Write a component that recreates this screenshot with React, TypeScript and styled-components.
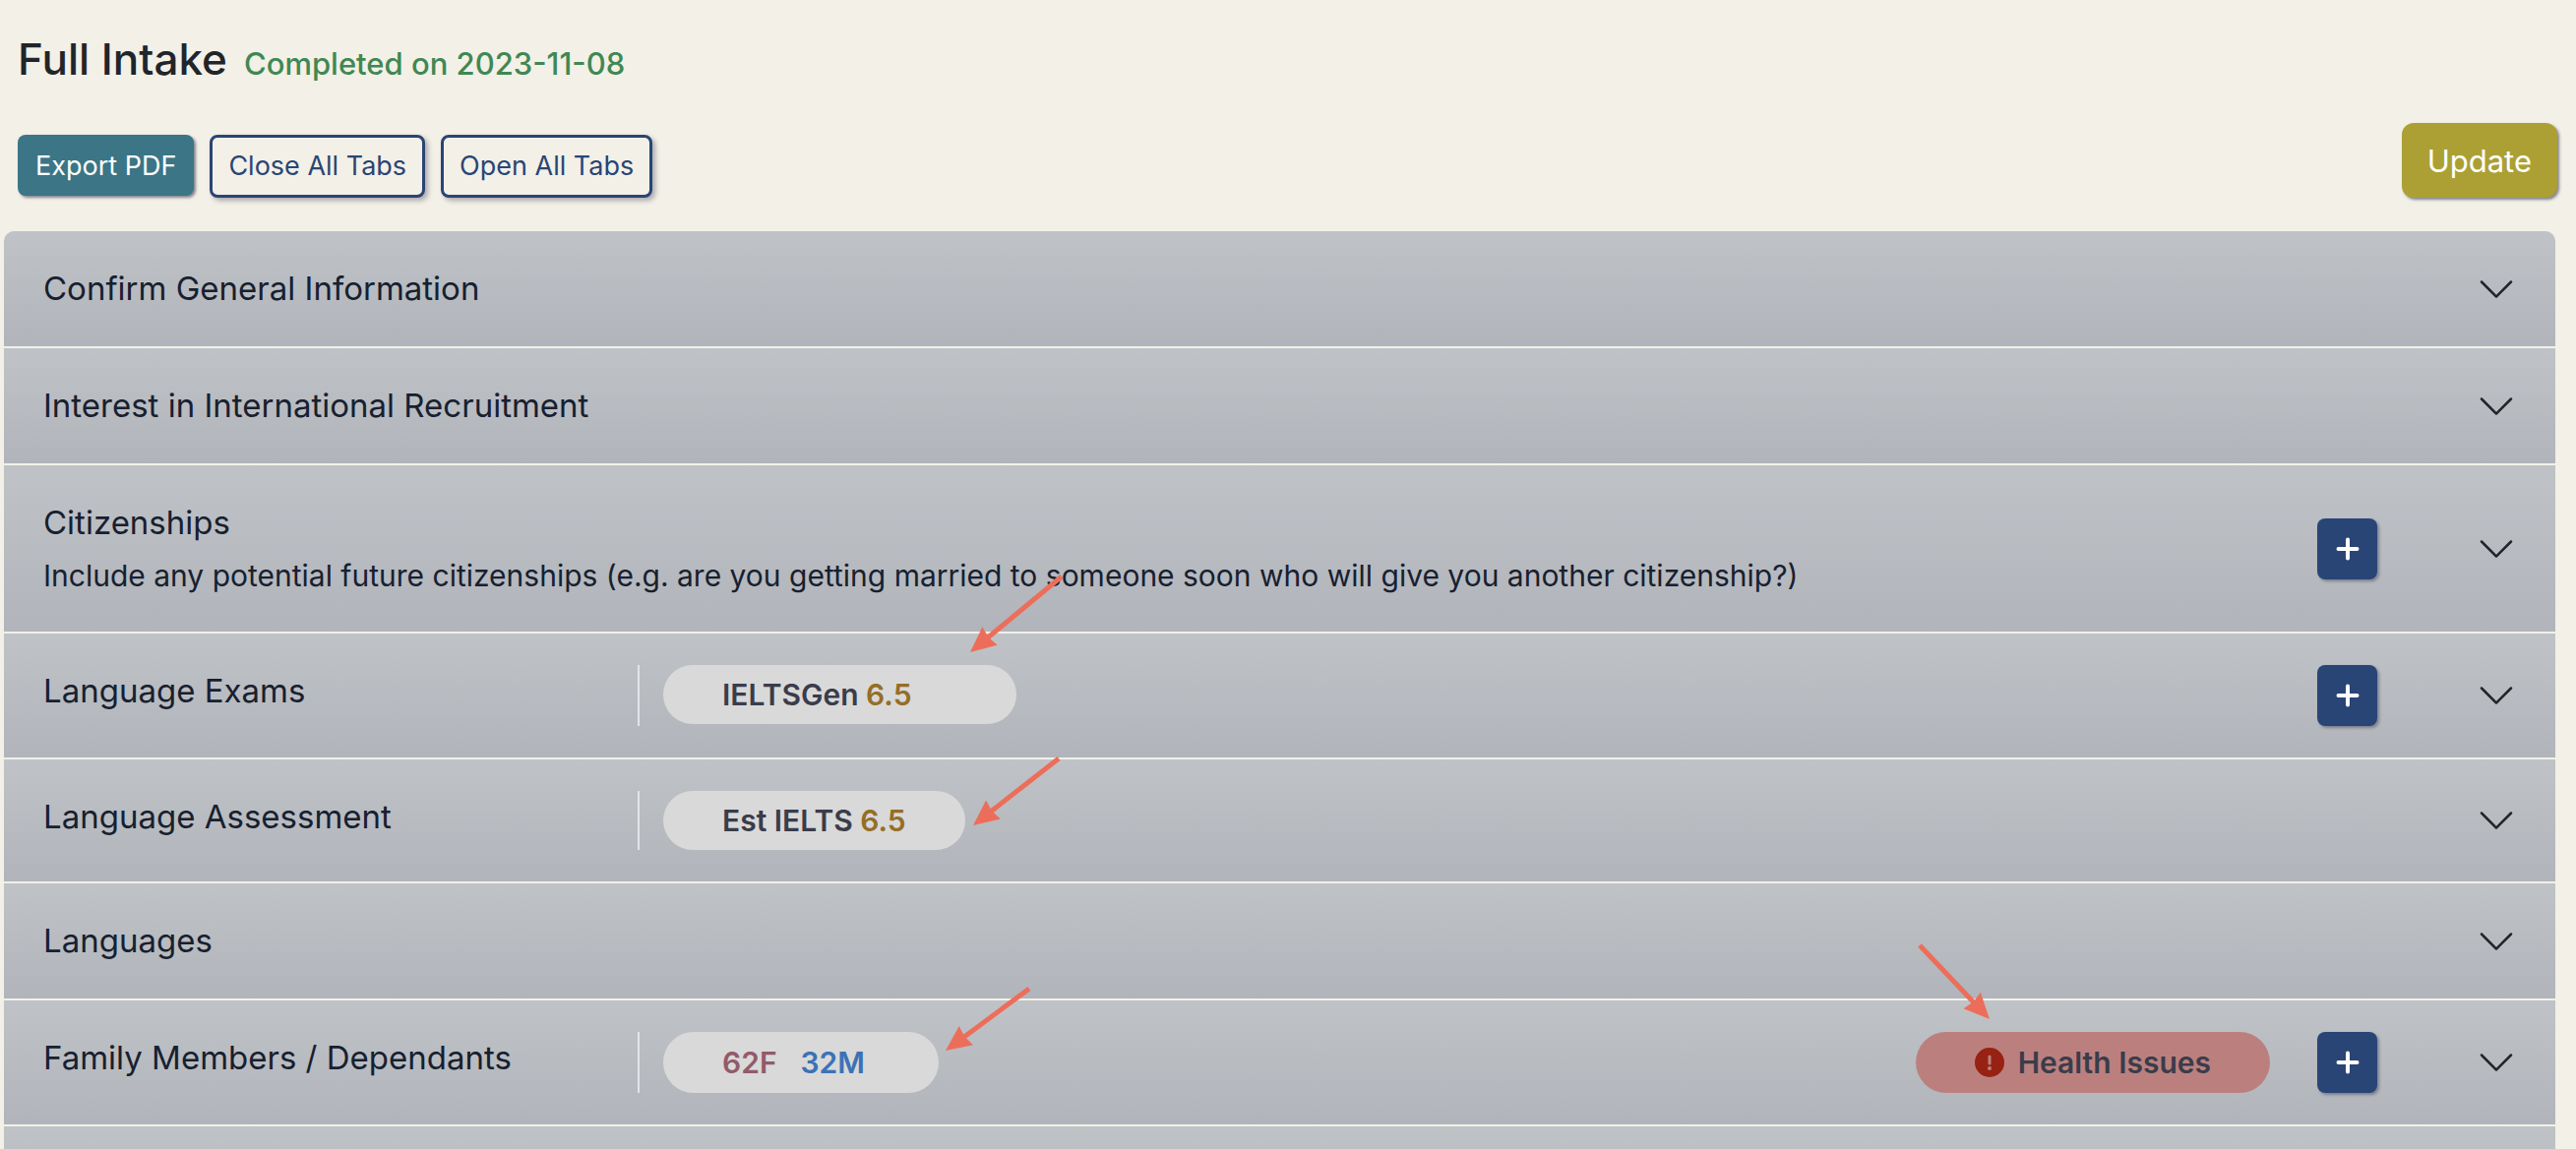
import React from "react";
import styled, { createGlobalStyle } from "styled-components";

const GlobalStyle = createGlobalStyle`
  *, *::before, *::after { box-sizing: border-box; }
  body {
    margin: 0;
    background: #f3f0e7;
    color: #212529;
    font-family: Inter, "Liberation Sans", sans-serif;
    font-size: 27px;
  }
  button { font-family: inherit; cursor: pointer; }
`;

const Page = styled.main`
  height: 100vh;
  overflow: hidden;
  padding: 27px 0 0 4px;
`;

const Header = styled.header`
  display: flex;
  align-items: baseline;
  gap: 17px;
  padding-left: 14px;
`;

const PageTitle = styled.h1`
  margin: 0;
  font-size: 44px;
  line-height: 66px;
  font-weight: 500;
`;

const Status = styled.span`
  color: #3f8853;
  font-size: 31px;
  font-weight: 500;
`;

const Toolbar = styled.div`
  display: flex;
  justify-content: space-between;
  align-items: flex-end;
  padding: 32px 19px 34px 14px;
`;

const ButtonGroup = styled.div`
  display: flex;
  align-items: flex-start;
  gap: 16px;
`;

const Button = styled.button`
  border: 0;
  border-radius: 8px;
  padding: 11px 18px 9px;
  font-size: 27px;
  line-height: 42px;
  box-shadow: 2px 2px 3px rgba(40, 40, 70, 0.55);
`;

const ExportButton = styled(Button)`
  background: #3b7586;
  color: #fff;
`;

const OutlineButton = styled(Button)`
  border: 3px solid #294575;
  padding: 8px 16px;
  background: #f3f0e7;
  color: #294575;
  box-shadow: 3px 3px 5px rgba(40, 40, 70, 0.35);
`;

const UpdateButton = styled(Button)`
  border-radius: 12px;
  padding: 15px 26px 13px;
  background: #aca034;
  color: #fff;
  font-size: 31px;
  line-height: 48px;
`;

const Accordion = styled.div`
  display: flex;
  flex-direction: column;
  gap: 2px;
  margin-right: 21px;
  border-radius: 10px;
  overflow: hidden;
`;

const Row = styled.section`
  display: flex;
  align-items: center;
  min-height: 117px;
  padding: 32px 40px;
  background: linear-gradient(#bfc3c7, #b1b4ba);
  color: #17202f;
`;

const RowBody = styled.div`
  flex: 1;
  align-self: stretch;
  display: flex;
  align-items: stretch;
`;

const Heading = styled.div`
  min-width: 604px;
`;

const RowTitle = styled.h2`
  margin: 0;
  font-size: 33px;
  line-height: 53px;
  font-weight: 400;
`;

const Description = styled.p`
  margin: 0;
  padding-top: 2px;
  font-size: 30px;
  line-height: 50px;
`;

const Summary = styled.div<{ $fill?: boolean }>`
  display: flex;
  align-items: ${(p) => (p.$fill ? "stretch" : "flex-start")};
  padding-left: 24px;
  border-left: 2px solid #e1e4e8;
`;

const Pill = styled.div<{ $tone?: "alert"; $trail?: number }>`
  position: relative;
  display: flex;
  align-items: center;
  min-height: 60px;
  padding: 0 ${(p) => p.$trail ?? 60}px 0 60px;
  border-radius: 31px;
  background: ${(p) => (p.$tone === "alert" ? "#bb807e" : "#d9d9d9")};
  color: #3a3c4a;
  font-size: 30px;
  line-height: 60px;
  font-weight: 600;
  white-space: pre;
`;

const AlertPill = styled(Pill)`
  gap: 14px;
  min-height: 62px;
  margin: 0 48px 0 auto;
`;

const Score = styled.span`
  color: #956e26;
`;

const Member = styled.span<{ $sex: "F" | "M" }>`
  margin-right: ${(p) => (p.$sex === "F" ? 24 : 15)}px;
  color: ${(p) => (p.$sex === "F" ? "#935a6a" : "#3b72b6")};
`;

const AddButton = styled.button`
  display: grid;
  place-items: center;
  width: 61px;
  height: 62px;
  padding: 0;
  border: 0;
  border-radius: 8px;
  background: #294575;
  box-shadow: 2px 2px 3px rgba(40, 40, 70, 0.4);
`;

const ToggleButton = styled.button`
  display: grid;
  place-items: center;
  margin-left: 101px;
  padding: 0;
  border: 0;
  background: none;
`;

const ArrowSvg = styled.svg<{ $left: string; $top: number }>`
  position: absolute;
  left: ${(p) => p.$left};
  top: ${(p) => p.$top}px;
  z-index: 1;
  width: 1px;
  height: 1px;
  overflow: visible;
  pointer-events: none;
`;

/* The tip is the origin; the shaft runs to (dx, dy). */
function Arrow({ left, top, dx, dy }: { left: string; top: number; dx: number; dy: number }) {
  const length = Math.hypot(dx, dy);
  const angle = (Math.atan2(dy, dx) * 180) / Math.PI;
  return (
    <ArrowSvg $left={left} $top={top} aria-hidden="true">
      <g transform={`rotate(${angle})`}>
        <path d={`M22 0H${length}`} stroke="#ec6e5a" strokeWidth="5" />
        <path d="M0 0L26 -12L24 0L26 12Z" fill="#ec6e5a" />
      </g>
    </ArrowSvg>
  );
}

function Toggle({ label }: { label: string }) {
  return (
    <ToggleButton aria-label={`Expand ${label}`}>
      <svg width="40" height="40" viewBox="0 0 16 16" fill="#212529">
        <path
          fillRule="evenodd"
          d="M1.646 4.646a.5.5 0 0 1 .708 0L8 10.293l5.646-5.647a.5.5 0 0 1 .708.708l-6 6a.5.5 0 0 1-.708 0l-6-6a.5.5 0 0 1 0-.708z"
        />
      </svg>
    </ToggleButton>
  );
}

function Add({ label }: { label: string }) {
  return (
    <AddButton aria-label={`Add to ${label}`}>
      <svg width="24" height="24" viewBox="0 0 24 24" stroke="#fff" strokeWidth="4" strokeLinecap="round">
        <path d="M12 2.5V21.5M2.5 12H21.5" />
      </svg>
    </AddButton>
  );
}

interface SectionProps {
  title: string;
  description?: string;
  addable?: boolean;
  children?: React.ReactNode;
}

function Section({ title, description, addable, children }: SectionProps) {
  return (
    <Row>
      <RowBody>
        <Heading>
          <RowTitle>{title}</RowTitle>
          {description && <Description>{description}</Description>}
        </Heading>
        {children}
      </RowBody>
      {addable && <Add label={title} />}
      <Toggle label={title} />
    </Row>
  );
}

export default function App() {
  return (
    <>
      <GlobalStyle />
      <Page>
        <Header>
          <PageTitle>Full Intake</PageTitle>
          <Status>Completed on 2023-11-08</Status>
        </Header>
        <Toolbar>
          <ButtonGroup>
            <ExportButton>Export PDF</ExportButton>
            <OutlineButton>Close All Tabs</OutlineButton>
            <OutlineButton>Open All Tabs</OutlineButton>
          </ButtonGroup>
          <UpdateButton>Update</UpdateButton>
        </Toolbar>
        <Accordion>
          <Section title="Confirm General Information" />
          <Section title="Interest in International Recruitment" />
          <Section
            title="Citizenships"
            description="Include any potential future citizenships (e.g. are you getting married to someone soon who will give you another citizenship?)"
            addable
          />
          <Section title="Language Exams" addable>
            <Summary>
              <Pill $trail={106}>
                IELTSGen <Score>6.5</Score>
                <Arrow left="calc(100% - 47px)" top={-13} dx={93} dy={-77} />
              </Pill>
            </Summary>
          </Section>
          <Section title="Language Assessment">
            <Summary>
              <Pill>
                Est IELTS <Score>6.5</Score>
                <Arrow left="calc(100% + 8px)" top={35} dx={87} dy={-68} />
              </Pill>
            </Summary>
          </Section>
          <Section title="Languages" />
          <Section title="Family Members / Dependants" addable>
            <Summary $fill>
              <Pill>
                <Member $sex="F">62F</Member>
                <Member $sex="M">32M</Member>
                <Arrow left="calc(100% + 7px)" top={19} dx={85} dy={-63} />
              </Pill>
            </Summary>
            <AlertPill $tone="alert">
              <svg width="30" height="30" viewBox="0 0 30 30" aria-hidden="true">
                <circle cx="15" cy="15" r="15" fill="#972213" />
                <path d="M15 9V16" stroke="#bb807e" strokeWidth="3" strokeLinecap="round" />
                <circle cx="15" cy="21" r="2" fill="#bb807e" />
              </svg>
              Health Issues
              <Arrow left="75px" top={-13} dx={-71} dy={-75} />
            </AlertPill>
          </Section>
          <Section title="" />
        </Accordion>
      </Page>
    </>
  );
}
